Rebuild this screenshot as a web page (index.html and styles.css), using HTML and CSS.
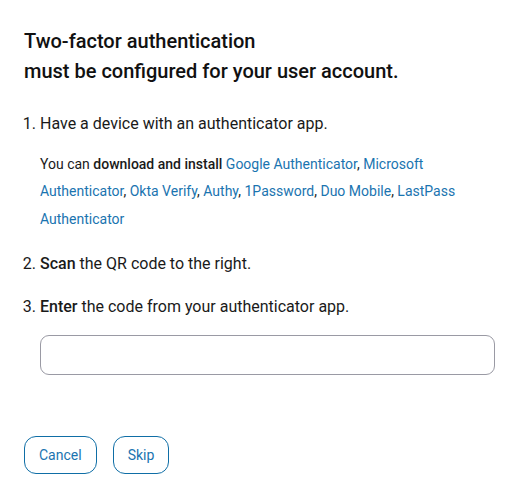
FILE: index.html
```html
<!DOCTYPE html>
<html>
<head>
<meta charset="utf-8">
<link rel="stylesheet" href="styles.css">
</head>
<body>
<div class="page">
  <h1 class="title">Two-factor authentication<br>must be configured for your user account.</h1>
  <ol class="steps">
    <li class="step">
      <p class="step-text">Have a device with an authenticator app.</p>
      <p class="note">You can <b>download and install</b> <a href="#">Google Authenticator</a>, <a href="#">Microsoft Authenticator</a>, <a href="#">Okta Verify</a>, <a href="#">Authy</a>, <a href="#">1Password</a>, <a href="#">Duo Mobile</a>, <a href="#">LastPass Authenticator</a></p>
    </li>
    <li class="step">
      <p class="step-text"><b>Scan</b> the QR code to the right.</p>
    </li>
    <li class="step">
      <p class="step-text"><b>Enter</b> the code from your authenticator app.</p>
      <input class="code-input" type="text">
    </li>
  </ol>
  <div class="actions">
    <button class="btn">Cancel</button>
    <button class="btn">Skip</button>
  </div>
</div>
</body>
</html>
```
FILE: styles.css
```css
html, body {
  margin: 0;
  padding: 0;
  background: #fff;
}
body {
  font-family: Roboto, "Noto Sans", sans-serif;
  color: #1a1a1a;
}
.page {
  padding: 26px 17px 0 24px;
}
.title {
  margin: 0;
  font-size: 20px;
  font-weight: 500;
  line-height: 30px;
  color: #111;
}
.steps {
  margin: 26px 0 0 0;
  padding: 0 0 0 16px;
  font-size: 16px;
}
.step-text {
  margin: 0;
  line-height: 24px;
}
.step + .step {
  margin-top: 19px;
}
.note {
  margin: 14.5px 0 2px 0;
  font-size: 14px;
  line-height: 27.5px;
}
.note b,
.step-text b {
  font-weight: 500;
}
.note a {
  color: #1a74b0;
  text-decoration: none;
}
.code-input {
  display: block;
  box-sizing: border-box;
  width: 455px;
  height: 40px;
  margin-top: 15.5px;
  border: 1px solid #9a9aa4;
  border-radius: 9px;
  font: inherit;
}
.actions {
  display: flex;
  gap: 16px;
  margin-top: 61px;
}
.btn {
  box-sizing: border-box;
  height: 38px;
  padding: 0 14px;
  border: 1.5px solid #0f6ea6;
  border-radius: 12px;
  background: #fff;
  color: #1a74b0;
  font-family: Roboto, sans-serif;
  font-size: 14px;
}
```
